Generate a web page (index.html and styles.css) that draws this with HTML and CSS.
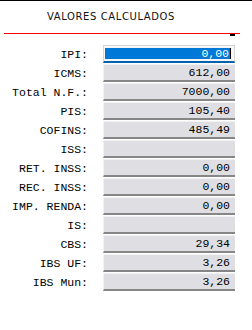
FILE: index.html
```html
<!DOCTYPE html>
<html lang="pt-br">
<head>
    <meta charset="UTF-8">
    <title>Valores Calculados</title>
    <link rel="stylesheet" href="styles.css">
</head>
<body>

<div class="titulo">VALORES CALCULADOS</div>
<div class="linha"></div>
<div class="marca"></div>

<div class="campos">
    <label>IPI:</label>
    <div class="campo ativo"><span class="selecao">0,00</span></div>

    <label>ICMS:</label>
    <div class="campo">612,00</div>

    <label>Total N.F.:</label>
    <div class="campo">7000,00</div>

    <label>PIS:</label>
    <div class="campo">105,40</div>

    <label>COFINS:</label>
    <div class="campo">485,49</div>

    <label>ISS:</label>
    <div class="campo"></div>

    <label>RET. INSS:</label>
    <div class="campo">0,00</div>

    <label>REC. INSS:</label>
    <div class="campo">0,00</div>

    <label>IMP. RENDA:</label>
    <div class="campo">0,00</div>

    <label>IS:</label>
    <div class="campo"></div>

    <label>CBS:</label>
    <div class="campo">29,34</div>

    <label>IBS UF:</label>
    <div class="campo">3,26</div>

    <label>IBS Mun:</label>
    <div class="campo">3,26</div>
</div>

</body>
</html>
```

FILE: styles.css
```css
body {
    margin: 0;
    padding: 0;
    background-color: #fff;
    border-top: 1px solid #000;
    font-family: "Liberation Mono", monospace;
    font-size: 11.5px;
    color: #000;
}
.titulo {
    padding: 10px 0 0 47px;
    height: 22px;
    line-height: 12px;
    font-family: "DejaVu Sans", Verdana, sans-serif;
    font-size: 10px;
    letter-spacing: 0.6px;
    color: #111;
}
.linha {
    margin-left: 4px;
    width: 236px;
    height: 1px;
    background-color: #f00;
}
.marca {
    margin-left: 230px;
    width: 5px;
    height: 2px;
    background-color: #000;
}
.campos {
    display: grid;
    grid-template-columns: 88px 132px;
    column-gap: 15px;
    row-gap: 1px;
    margin-top: 9px;
}
.campos label {
    align-self: center;
    text-align: right;
    white-space: nowrap;
    line-height: 15px;
}
.campo {
    height: 15px;
    line-height: 15px;
    padding-right: 5px;
    text-align: right;
    background-color: #dfdfe3;
    border-top: 1px solid #f2f2f2;
    border-left: 1px solid #f2f2f2;
    border-bottom: 2px solid #868686;
    color: #000;
}
.campo.ativo {
    padding: 2px 3px 1px 1px;
    height: 12px;
    background-color: #f7f7f7;
    border: 1px solid #d6d6d6;
    border-bottom: 2px solid #0063b1;
}
.selecao {
    display: block;
    height: 11px;
    line-height: 11px;
    padding-right: 1px;
    background-color: #0078d7;
    color: #fff;
    border-right: 1px solid #000;
}
```
